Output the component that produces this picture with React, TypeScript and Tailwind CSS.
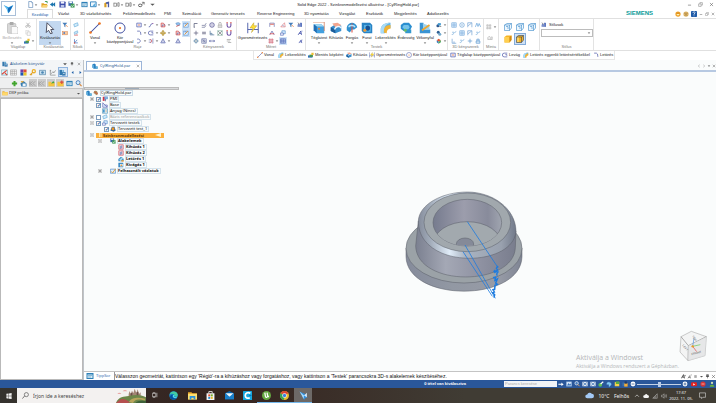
import { useState, type ReactNode } from "react"
import clsx from "clsx"

const glyphs: Record<string, ReactNode> = {
  newDoc: <><path d="M4 1h6l3 3v11H4z" fill="#fff" stroke="#5b86b5" strokeWidth="1.5" /><path d="M10 1v3h3" fill="none" stroke="#5b86b5" /></>,
  open: <><path d="M1 5h5l2 2h6v7H1z" fill="#e2a52c" /><path d="M4 9h12l-3 6H1z" fill="#f8d475" /><path d="M9 1h5v4" fill="none" stroke="#2e9140" strokeWidth="2" /></>,
  arrowLeft: <path d="M14 3v10L9 9v4L2 8l7-5v4z" fill="#1a74ae" />,
  save: <><path d="M1 1h13l1 2v12H1z" fill="#3949a8" /><path d="M4 1h8v5H4z" fill="#f2f5ff" /><path d="M4 9h8v6H4z" fill="#b9c4e8" /></>,
  saveAs: <><path d="M1 1h10v10H1z" fill="#3966ae" /><path d="M3 1h6v4H3z" fill="#fff" /><path d="M6 6h9v9H6z" fill="#3e9a56" /><path d="M8 10l2 3 4-5" fill="none" stroke="#fff" strokeWidth="1.5" /></>,
  props: <><path d="M1 2h14v12H1z" fill="#2f80b7" /><path d="M3 5h10v7H3z" fill="#d6ecf7" /><path d="M4 7h8M4 10h6" stroke="#4586b0" /></>,
  window: <><path d="M1 2h13v11H1z" fill="#edf6fc" stroke="#277bb8" strokeWidth="2" /><path d="M6 10l7-6-2 9z" fill="#5aaee0" /></>,
  tools: <><path d="M3 14V5l5-3v12z" fill="#d59c23" /><path d="M7 3l7-2v13h-3V6L7 7z" fill="#4a5ba5" /></>,
  undo: <path d="M2 4v9M2 5h6v7H3M11 4h3v8h-3z" fill="none" stroke="#777" strokeWidth="1.7" />,
  link: <><ellipse cx="5" cy="10" rx="4" ry="3" fill="none" stroke="#555" strokeWidth="2" /><path d="M8 9l6-6M9 3h5v5" fill="none" stroke="#555" strokeWidth="1.6" /></>,
  arrowDown: <path d="M3 6h10l-5 5z" fill="#555" />,
  logo: <><path d="M1 3l7 3 7-3-4 8-3 4-2-6z" fill="#2c9ce0" /><path d="M1 3l8 6-2 5-2-6z" fill="#6bc6f2" /><path d="M7 8l7-4-6 11z" fill="#1767b5" /></>,
  paste: <><rect x="2" y="2" width="11" height="13" rx="1" fill="#d8d8d8" stroke="#bbb" /><path d="M5 0h5v4H5z" fill="#aaa" /><path d="M7 6h7l2 2v8H7z" fill="#fafafa" stroke="#bbb" /></>,
  cut: <><path d="M4 2l7 9M12 2l-7 9" stroke="#999" strokeWidth="1.6" /><circle cx="4" cy="12" r="2.4" fill="none" stroke="#999" strokeWidth="1.4" /><circle cx="12" cy="12" r="2.4" fill="none" stroke="#999" strokeWidth="1.4" /></>,
  copy: <><path d="M2 1h8v10H2z" fill="#f8f8f8" stroke="#bbb" /><path d="M6 5h8v10H6z" fill="#f8f8f8" stroke="#aaa" /></>,
  pasteBlue: <><path d="M0 9h12v6H0z" fill="#2f6fbd" /><path d="M4 7h9v6H4z" fill="#4c9750" /><path d="M9 2h6v6H9z" fill="#f0bd30" /></>,
  cursor: <path d="M4 1l9 9H9l2 5-2 1-3-5-3 3z" fill="#fff" stroke="#334" strokeWidth="1.1" />,
  filter: <><path d="M1 2h13L9 8v6L6 12V8z" fill="#457db9" /><path d="M10 8l5 5" stroke="#e8762f" strokeWidth="2" /></>,
  box: <><rect x="1" y="4" width="14" height="9" fill="#f6caa0" stroke="#ce6b36" /><path d="M4 6h4v4H4z" fill="#3a6fc7" /></>,
  plane: <path d="M2 6l10-4 2 7-10 4z" fill="#d3ecfa" stroke="#4a9dd2" strokeWidth="1.4" />,
  planeRed: <><path d="M3 6l9-4 1 6-9 4z" fill="#c3e4f6" stroke="#3a8cc6" /><path d="M3 14h9M9 11l4 3" stroke="#d9534f" strokeWidth="1.6" /></>,
  axes: <><path d="M4 3v10h9M4 13l7-8" fill="none" stroke="#3b6ec0" strokeWidth="1.8" /><circle cx="4" cy="13" r="2" fill="#da4c37" /></>,
  line: <><path d="M2 14L14 2" stroke="#3949a0" strokeWidth="1.4" /><circle cx="2" cy="14" r="1.8" fill="#ed7624" /><circle cx="14" cy="2" r="1.8" fill="#ed7624" /></>,
  circle: <><circle cx="8" cy="8" r="6.7" fill="none" stroke="#3f4d9f" strokeWidth="1.3" /><circle cx="8" cy="8" r="1.5" fill="#ee792a" /></>,
  rect: <><path d="M2 3h12v10H2z" fill="#eef" stroke="#4552a2" strokeWidth="1.7" /><circle cx="8" cy="8" r="1.8" fill="#ed792d" /></>,
  curve: <><path d="M2 13C8 15 5 3 13 4" fill="none" stroke="#4450a0" strokeWidth="1.9" /><circle cx="13" cy="4" r="1.6" fill="#9b54a5" /></>,
  offset: <><path d="M3 13V3h6l4 5v5z" fill="#f9d5d2" stroke="#d54d4b" strokeWidth="2" /><path d="M6 13V8h8" stroke="#4a58a0" fill="none" strokeWidth="1.5" /></>,
  arc: <path d="M3 3h6q4 0 4 10" fill="none" stroke="#4151a3" strokeWidth="1.8" />,
  trim: <path d="M14 3H6a5 5 0 0 0 0 10h8M9 7h4v3" fill="none" stroke="#4652a5" strokeWidth="1.8" />,
  move: <path d="M8 0l3 4h-2v3h3V5l4 3-4 3V9H9v3h2l-3 4-3-4h2V9H4v2L0 8l4-3v2h3V4H5z" fill="#cda22a" stroke="#8d7325" strokeWidth=".6" />,
  arc2: <path d="M3 3c8-2 12 7 4 10H3" fill="none" stroke="#4454a4" strokeWidth="1.8" />,
  mirror: <><path d="M13 1v14M2 5h7M2 11h7" stroke="#4450a0" strokeWidth="1.4" /><path d="M6 3l5 5-5 5" fill="none" stroke="#d64950" strokeWidth="2" /></>,
  triangle: <><path d="M8 2l6 11H2z" fill="#e9ebf8" stroke="#4855a2" strokeWidth="1.6" /><path d="M8 6v7" stroke="#4855a2" /></>,
  sketch: <><path d="M1 3h13v11H1z" fill="#d8ecff" stroke="#4987cb" strokeWidth="1.4" /><path d="M4 12l9-9" stroke="#e6902e" strokeWidth="2.4" /><path d="M4 5h5" stroke="#356bb4" strokeWidth="1.5" /></>,
  blueRed: <><path d="M2 3l7-2 5 3-2 5-6 1z" fill="#8dbde9" stroke="#4373b8" /><path d="M3 12l9-4" stroke="#dd564c" strokeWidth="2" /></>,
  corner: <path d="M3 14V4h9M2 14h3" fill="none" stroke="#434869" strokeWidth="1.8" />,
  tangent: <path d="M2 9h8l4-6M2 14h8l3-5" fill="none" stroke="#535984" strokeWidth="1.6" />,
  ring: <><circle cx="8" cy="8" r="6" fill="none" stroke="#4c4b8f" strokeWidth="2" /><circle cx="8" cy="8" r="3" fill="none" stroke="#625fa4" /></>,
  lock: <><path d="M3 8h10v7H3z" fill="#ddd" stroke="#888" /><path d="M5 8V4a3 3 0 0 1 6 0v4" fill="none" stroke="#888" strokeWidth="1.5" /></>,
  magnet: <><path d="M3 3v6a5 5 0 0 0 10 0V3" fill="none" stroke="#7254a8" strokeWidth="3" /><path d="M1 2h4M11 2h4" stroke="#d8554c" strokeWidth="3" /></>,
  plus: <path d="M8 2v12M2 8h12" stroke="#545475" strokeWidth="1.8" />,
  equal: <path d="M3 6h10M3 10h10" stroke="#555576" strokeWidth="2" />,
  perp: <path d="M3 2v11h11M3 9h5v4" fill="none" stroke="#446b92" strokeWidth="1.7" />,
  sym: <><path d="M2 2l12 12M14 2L2 14" stroke="#383844" strokeWidth="1.3" /><path d="M2 2h12v12H2z" fill="none" stroke="#66a28b" strokeWidth="1.4" /></>,
  diamond: <><path d="M8 2l6 6-6 6-6-6z" fill="none" stroke="#386b96" strokeWidth="2" /><path d="M8 5v6M5 8h6" stroke="#356" /></>,
  gridX: <><path d="M2 2h12v12H2zM2 8h12M8 2v12" fill="none" stroke="#4d5590" strokeWidth="1.5" /><path d="M3 3l10 10" stroke="#4d5590" /></>,
  wide: <path d="M1 8h14M4 5L1 8l3 3M12 5l3 3-3 3" fill="none" stroke="#4c569c" strokeWidth="1.8" />,
  list: <path d="M2 4h11M2 8h9M5 12h9" stroke="#888" strokeWidth="1.5" />,
  dim: <><path d="M1 1v14M15 1v14M1 10h14" stroke="#4658a7" strokeWidth="1.2" /><path d="M9 1L4 8h4l-2 6 7-9H9z" fill="#ffe039" stroke="#b69318" strokeWidth=".6" /></>,
  angle: <><path d="M2 13V3h12v10" fill="none" stroke="#4c55a0" strokeWidth="1.5" /><path d="M3 6h10" stroke="#df6259" strokeWidth="2.5" /></>,
  angleRed: <><path d="M2 13L12 2l2 11z" fill="none" stroke="#d7595d" strokeWidth="1.4" /><path d="M5 10c4-4 5 0 6 3" fill="none" stroke="#5378b7" /></>,
  coord: <><path d="M2 13L8 3l6 10" fill="none" stroke="#4a55a2" strokeWidth="1.8" /><path d="M2 10h12" stroke="#d8464a" strokeWidth="2" /></>,
  tag: <><path d="M5 2h9v8H5z" fill="#d4eaff" stroke="#4380c1" strokeWidth="1.5" /><path d="M1 8h8v6H1z" fill="#eef" stroke="#4560ac" strokeWidth="1.5" /></>,
  hashRed: <path d="M5 1v14M11 1v14M1 5h14M1 11h14" stroke="#ca4c61" strokeWidth="1.8" />,
  table: <path d="M1 2h14v12H1zM1 6h14M1 10h14M5 2v12M10 2v12" fill="#d6e6fc" stroke="#3e5aae" strokeWidth="1.5" />,
  tableGrey: <path d="M1 2h14v12H1zM1 6h14M1 10h14M5 2v12M10 2v12" fill="#fff" stroke="#999" strokeWidth="1.3" />,
  letterA: <><path d="M3 13L10 3l2 10M6 9h5" fill="none" stroke="#2d3da0" strokeWidth="2" /><path d="M11 3h4" stroke="#2d3da0" /></>,
  letterBars: <><path d="M3 13V7h3v6M9 13V3h3v10" fill="none" stroke="#2748aa" strokeWidth="2" /><path d="M2 2l5 4" stroke="#444" strokeWidth="1.6" /></>,
  block: <><path d="M1 3h10l4 3v9H5l-4-4z" fill="#43a0df" /><path d="M1 3h10l4 3H5z" fill="#a3d8f3" /><path d="M1 3v8l4 4V6z" fill="#216db3" /><path d="M0 0h15v12" fill="none" stroke="#d07b5a" strokeWidth="1" /><circle cx="8" cy="9" r="1.3" fill="#f08135" /></>,
  extrude: <><path d="M1 7l8-5 6 3v7l-8 3-6-3z" fill="#398fce" /><path d="M1 7l6 3v5l-6-3z" fill="#1d5d99" /><path d="M3 2l7-1 5 3-7 4z" fill="#f4a58d" /><path d="M6 10c2-5 7-5 9-2" fill="none" stroke="#e9f6ff" strokeWidth="2" /></>,
  revolve: <><path d="M1 7c2-8 12-8 14 0l-4 3H8l-3 4-4-3z" fill="#3091d0" /><path d="M8 2v12" stroke="#d95045" strokeWidth="1.4" /><path d="M4 7c0-3 7-3 8 0" fill="none" stroke="#b7e2fa" strokeWidth="2" /></>,
  hole: <><path d="M1 1h11l3 3v11H4l-3-3z" fill="#2983c5" /><path d="M4 4h9v9H4z" fill="#5ab3e4" /><ellipse cx="9" cy="8" rx="3" ry="3.5" fill="#174f91" /><circle cx="5" cy="11" r="2" fill="#ef9b36" /></>,
  round: <><path d="M1 15V9C2 3 8 1 14 1v7c-4 0-7 3-7 7z" fill="#66b4e4" /><path d="M5 14V9c2-4 5-5 9-5v5c-4 0-5 3-5 6z" fill="#efb336" /><path d="M1 15V9C2 3 8 1 14 1c-7 2-9 6-9 14z" fill="#a9dcf7" /></>,
  draft: <><path d="M1 4l4-3h7l4 5-3 6H5L1 9z" fill="#2b8ed0" /><path d="M5 4h6l2 3-2 3H6L3 7z" fill="#75c3ea" /><path d="M7 10h8v5H7z" fill="#3498cf" /><circle cx="7" cy="11" r="2" fill="#67bc6d" /></>,
  thin: <><path d="M1 1h5v9h9v5H1z" fill="#3a94d3" /><path d="M5 2l9 3v5H6z" fill="#9dd3ee" /><path d="M4 11L14 4" stroke="#f0a72e" strokeWidth="2.3" /></>,
  combine: <><circle cx="5" cy="10" r="4" fill="#2c568e" /><path d="M5 3h8v6H5z" fill="#459bd0" /><path d="M9 12h5" stroke="#444" strokeWidth="1.5" /></>,
  ball: <><circle cx="6" cy="6" r="4" fill="#2d5f93" /><circle cx="10" cy="11" r="4" fill="#73aacd" /></>,
  color: <><path d="M2 6l5-4 6 4-6 4z" fill="#e65432" /><path d="M2 6l5 4v5l-5-4z" fill="#3076bb" /><path d="M7 10l6-4v5l-6 4z" fill="#46a75b" /></>,
  cGrid: <path d="M2 2h12v12H2zM2 8h12M8 2v12" fill="#e5f3ff" stroke="#619bd4" strokeWidth="1.5" />,
  cRing: <><circle cx="8" cy="8" r="6" fill="none" stroke="#649cd2" strokeWidth="1.8" /><circle cx="8" cy="8" r="2" fill="#76afe1" /></>,
  cFlag: <path d="M2 14V2h11v12M3 10l9-7" fill="none" stroke="#669bcf" strokeWidth="1.7" />,
  cWave: <path d="M1 13l4-10 3 9 3-8 4 9" fill="none" stroke="#5f9fd8" strokeWidth="1.8" />,
  cSlash: <path d="M2 12c4 2 8-8 12-8M3 6h5" fill="none" stroke="#6aa4d6" strokeWidth="1.7" />,
  cPerp: <path d="M3 2v12h11M8 9v5" fill="none" stroke="#689bd1" strokeWidth="1.8" />,
  cPlus: <path d="M8 2v12M2 8h12" stroke="#689fd2" strokeWidth="2" />,
  cLock: <path d="M3 8h10v6H3zM5 8V3h6v5" fill="#d8ebf9" stroke="#5b94cd" strokeWidth="1.7" />,
  pattern: <path d="M2 2h4v4H2zM9 2h4v4H9zM2 9h4v4H2zM9 9h4v4H9z" fill="#eee" stroke="#888" />,
  patternRound: <path d="M2 12V7l4-4 4 4v5zM11 5h3v7h-4" fill="#eee" stroke="#888" />,
  cubeWire: <path d="M1 4l5-3h9v9l-4 5H1zM1 4h10v11M11 4l4-3M4 7h4v5" fill="#edf7ff" stroke="#3c8bc9" strokeWidth="1.2" />,
  cubeGold: <><path d="M1 4l4-3h10v9l-4 5H1z" fill="#f6b323" /><path d="M1 4h10v11H1z" fill="#ffcf50" /><path d="M11 4l4-3v9l-4 5z" fill="#cf8815" /></>,
  cubeEdge: <><path d="M1 4l4-3h10v9l-4 5H1z" fill="#f6b323" stroke="#38455a" strokeWidth="1.2" /><path d="M1 4h10v11M11 4l4-3" fill="none" stroke="#38455a" strokeWidth="1.2" /><path d="M4 5v9" stroke="#fff1a0" strokeWidth="2" /></>,
  smile: <><circle cx="8" cy="8" r="7" fill="#efa12a" /><path d="M4 8c1 5 7 5 8 0z" fill="#fff2b6" /><circle cx="5.5" cy="5.5" r="1" fill="#744800" /><circle cx="10.5" cy="5.5" r="1" fill="#744800" /></>,
  frown: <><circle cx="8" cy="8" r="7" fill="#ddb567" /><path d="M5 12c1-3 5-3 6 0" fill="none" stroke="#765324" strokeWidth="1.3" /><path d="M4 6h3M9 6h3" stroke="#765324" strokeWidth="1.5" /></>,
  help: <><rect width="16" height="16" rx="2" fill="#205ca8" /><path d="M5 5c0-4 7-3 6 0L8 8v2M8 12v2" fill="none" stroke="#fff" strokeWidth="2" /></>,
  min: <path d="M3 10h10" stroke="#555" strokeWidth="1.8" />,
  restore: <><path d="M2 6h8v8H2z" fill="none" stroke="#666" strokeWidth="1.4" /><path d="M6 5V2h8v8h-3" fill="none" stroke="#666" strokeWidth="1.4" /></>,
  close: <path d="M3 3l10 10M13 3L3 13" stroke="#555" strokeWidth="1.7" />,
  left: <path d="M11 3L5 8l6 5" fill="none" stroke="#777" strokeWidth="1.5" />,
  right: <path d="M5 3l6 5-6 5" fill="none" stroke="#777" strokeWidth="1.5" />,
  leftBlue: <path d="M11 3L5 8l6 5z" fill="#1d5fa8" />,
  rightBlue: <path d="M5 3l6 5-6 5z" fill="#1d5fa8" />,
  pin: <path d="M5 2h6v6H5zM3 8h10M8 8v6" fill="#777" stroke="#333" strokeWidth="1.5" />,
  library: <><path d="M1 2h6v12H1z" fill="#3278ae" /><path d="M8 2h3v12H8z" fill="#61a9d7" /><path d="M7 7h8v8H7z" fill="#387bb0" /><path d="M9 10h4" stroke="#fff" strokeWidth="1.6" /></>,
  part: <><path d="M1 4l5-3 4 3v5h5v6H5l-4-3z" fill="#2a7fc0" /><path d="M1 4l4 2v9l-4-3z" fill="#62b3df" /><path d="M10 9h5v6h-5z" fill="#64b8df" /></>,
  redCross: <><path d="M1 2h14v12H1z" fill="#dbf1fa" stroke="#478e9f" /><path d="M2 12L13 3M9 9l5 5" stroke="#df4234" strokeWidth="2.4" /></>,
  palette: <><path d="M1 1h7v7H1z" fill="#713ea5" /><path d="M8 1h7v7H8z" fill="#df4d37" /><path d="M1 8h7v7H1z" fill="#1e57b4" /><path d="M8 8h7v7H8z" fill="#e7c52d" /></>,
  key: <><circle cx="11" cy="5" r="3.5" fill="none" stroke="#edb029" strokeWidth="3" /><path d="M9 7l-7 7M4 11l3 3" stroke="#dfa126" strokeWidth="2.4" /></>,
  camera: <><path d="M1 3h14v10H1z" fill="#c8dfee" stroke="#4c81a7" strokeWidth="1.5" /><circle cx="8" cy="8" r="3" fill="#4a86b4" /></>,
  chart: <path d="M3 2v12h12M5 11l4-5 2 3 4-6M2 4h3" fill="none" stroke="#777" strokeWidth="1.4" />,
  green: <path d="M8 2v12M2 8h12" stroke="#41a52d" strokeWidth="4.5" />,
  home: <><path d="M1 8l7-6 7 6v7H3z" fill="#347bb0" /><path d="M6 8h7v6H6z" fill="#eef5fa" /><path d="M2 4h6" stroke="#e3a634" strokeWidth="3" /></>,
  muted: <path d="M8 3L3 8l5 5M14 3L9 8l5 5M2 3v10" fill="none" stroke="#9c9c9c" strokeWidth="2" />,
  folder: <><path d="M1 3h5l2 2h7v9H1z" fill="#e9ae34" /><path d="M1 6h14v8H1z" fill="#ffd76a" /></>,
  folderGreen: <><path d="M1 4h5l2 2h7v8H1z" fill="#f5c541" /><path d="M7 8l5-6 3 5z" fill="#44a640" /></>,
  folderRed: <><path d="M1 4h5l2 2h7v8H1z" fill="#f5c541" /><path d="M11 1v8M7 5h8" stroke="#dd4937" strokeWidth="2.6" /></>,
  magnifier: <><circle cx="7" cy="6" r="4.5" fill="#d8f0ff" stroke="#4179b9" strokeWidth="2" /><path d="M10 9l5 5" stroke="#d58638" strokeWidth="2.6" /></>,
  pmi: <><path d="M2 2h5v11H2z" fill="#cf3545" /><path d="M7 2h8v6H7z" fill="#8ab9e7" stroke="#386bb3" /><path d="M9 8v6" stroke="#3a5688" strokeWidth="2" /></>,
  base: <path d="M2 2v12h12L2 2M6 8h8v6" fill="#dceeff" stroke="#5c63b1" strokeWidth="1.7" />,
  material: <><path d="M1 2h14v12H1z" fill="#e1f2fa" stroke="#3d85a7" strokeWidth="1.5" /><path d="M3 4h4v8H3z" fill="#308ac7" /><path d="M9 6h4M9 9h4" stroke="#c0803c" /></>,
  bodyGold: <><path d="M1 12l4-10h7l3 10-5 3z" fill="#32659e" /><circle cx="8" cy="7" r="4" fill="#e99629" /></>,
  extrudeRed: <><path d="M2 2h12v12H2z" fill="#fce7e8" stroke="#cf4d5c" strokeWidth="1.7" /><path d="M6 5v8M10 4v8" stroke="#4366ad" strokeWidth="2" /></>,
  chamfer: <><path d="M1 14V8l7-6 7 5v7z" fill="#398ac5" /><path d="M3 10l8-7 3 2-7 9z" fill="#a6dbed" /><path d="M9 11h6v4H9z" fill="#eda23b" /></>,
  cutout: <><path d="M1 2h13v12H1z" fill="#3084c2" /><path d="M5 5h8v7H5z" fill="#d7edf7" /><circle cx="9" cy="9" r="2.4" fill="#ee9b41" /></>,
  used: <><path d="M1 3h14v11H1z" fill="#dcecff" stroke="#437fbf" strokeWidth="1.6" /><path d="M3 9l4 4 8-11" fill="none" stroke="#df9e2e" strokeWidth="2.5" /></>,
  swirl: <><path d="M3 3c7-3 10 2 10 7l-4 4c-3-3-6-5-8-6z" fill="#a98b60" /><path d="M4 5l9 6" stroke="#d85238" strokeWidth="2.2" /></>,
  wArrow: <path d="M1 7h8V4l6 5-6 4v-3H1z" fill="#fff" />,
  wWindow: <><path d="M1 2h14v12H1z" fill="#d7e7fa" stroke="#7ba7d8" /><path d="M3 11l4-6 3 4 3-3v6H3z" fill="#3770b6" /></>,
  wZoom: <><circle cx="7" cy="6" r="4.5" fill="#477dbe" stroke="#e5edf7" strokeWidth="2" /><path d="M10 9l5 5" stroke="#e4a564" strokeWidth="2.6" /></>,
  wFit: <><path d="M1 2h14v12H1z" fill="#e1eaf4" /><path d="M3 4l10 8M13 4L3 12" stroke="#3e74b5" strokeWidth="2" /></>,
  wGreen: <><circle cx="6" cy="10" r="5" fill="#5ebd58" /><path d="M7 8l7-6" stroke="#fff" strokeWidth="3" /></>,
  wRotate: <path d="M2 9c0-9 12-6 12 0M8 7l6 3-6 5V7z" fill="#80c9f3" stroke="#80c9f3" />,
  wYellow: <><path d="M2 3h12v11H2z" fill="#f5d34c" /><path d="M5 1h9v7H5z" fill="#5bab42" /></>,
  wOrange: <><path d="M1 4h8v10H1z" fill="#3b6fa9" /><path d="M6 6h9v9H6z" fill="#f4ae37" /><path d="M7 1h6v6H7z" fill="#1f3a67" /></>,
  wMinus: <><circle cx="8" cy="8" r="6.5" fill="#fff" /><path d="M4 8h8" stroke="#355c92" strokeWidth="2" /></>,
  wPlus: <><circle cx="8" cy="8" r="6.5" fill="#fff" /><path d="M4 8h8M8 4v8" stroke="#355c92" strokeWidth="2" /></>,
  youtube: <><rect x="0" y="3" width="16" height="11" rx="3" fill="#e22121" /><path d="M6 6l5 3-5 3z" fill="#fff" /></>,
  record: <><circle cx="8" cy="8" r="7" fill="#d73537" /><path d="M4 8h8" stroke="#f9cdc5" strokeWidth="2" /></>,
  person: <><circle cx="8" cy="5" r="3" fill="#d9e1b4" /><path d="M2 15c0-7 12-7 12 0z" fill="#67b33c" /></>,
  fontBig: <path d="M1 14L8 2l3 12M4 10h7M13 3v4" fill="none" stroke="#222" strokeWidth="2.2" />,
  fontSmall: <path d="M3 14L9 5l2 9M5 11h5M12 3h3" fill="none" stroke="#333" strokeWidth="1.6" />,
  lines: <path d="M4 5h8M4 8h8M4 11h8" stroke="#555" strokeWidth="1.5" />,
  windows: <path d="M1 2l6-1v6.5H1zM8 1l7-1v7.5H8zM1 8.5h6V15l-6-1zM8 8.5h7V16l-7-1z" fill="#f2f2f2" />,
  search: <><circle cx="10" cy="6" r="4.7" fill="none" stroke="#444" strokeWidth="1.4" /><path d="M6 9l-5 6" stroke="#444" strokeWidth="1.6" /></>,
  taskview: <><path d="M1 4h9v8H1z" fill="none" stroke="#eee" strokeWidth="1.5" /><path d="M13 2v12M2 1h7M2 15h7" stroke="#eee" strokeWidth="1.5" /></>,
  edge: <><circle cx="8" cy="8" r="7.5" fill="#1583cd" /><path d="M1 7C2-1 14-1 15.500 6c.5 4-3 5-6 3 1-4-5-6-8.500-2z" fill="#42cba3" /><path d="M7 7c-3 3 0 7 6 6-4 4-10 2-11-1-1-4 3-6 6-5z" fill="#064f9a" /><path d="M7 8c2-2 4 0 2 2 2 2 5 1 6-1-1 5-8 5-8-1z" fill="#5ee0ed" /></>,
  explorer: <><path d="M0 2h6l2 2h8v11H0z" fill="#eaa92a" /><path d="M0 5h16v10H0z" fill="#ffdf70" /><path d="M3 9h10v6h-3v-3H6v3H3z" fill="#2991dc" /></>,
  store: <><path d="M1 4h14v12H1z" fill="#f5f5f5" /><path d="M5 4V1h6v3" fill="none" stroke="#eee" strokeWidth="1.5" /><path d="M4 6h3.500v3.500H4z" fill="#e54d2d" /><path d="M8.500 6H12v3.500H8.500z" fill="#72ad28" /><path d="M4 10.500h3.500V14H4z" fill="#2189cf" /><path d="M8.500 10.500H12V14H8.500z" fill="#edb529" /></>,
  mail: <><path d="M0 4h16v11H0z" fill="#187fcb" /><path d="M0 4l8-4 8 4-8 6z" fill="#0763ac" /><path d="M1 4h14l-7 6z" fill="#f1f8fc" /></>,
  cc: <><rect width="16" height="16" rx="1" fill="#16a7df" /><path d="M13 4c-5-3-9 0-9 4s4 6 8 4" fill="none" stroke="#fff" strokeWidth="3" /><path d="M11 8h4" stroke="#0a74b6" strokeWidth="2" /></>,
  torrent: <><circle cx="8" cy="8" r="8" fill="#65a942" /><path d="M5 3l1 6c1 4 5 2 4-1L9 3M10 8l2 3" fill="none" stroke="#fff" strokeWidth="2.2" /></>,
  chrome: <><circle cx="8" cy="8" r="8" fill="#e5bd2e" /><path d="M8 8L1 4a8 8 0 0 1 14 0z" fill="#dc4532" /><path d="M8 8L1 4a8 8 0 0 0 6 12z" fill="#38a354" /><circle cx="8" cy="8" r="4" fill="#fff" /><circle cx="8" cy="8" r="3" fill="#3b7de0" /></>,
  solidEdge: <><path d="M1 1l9 4 5 6-4 2-2 3-3-7z" fill="#338edb" /><path d="M1 1l8 7-1 6-3-6z" fill="#a4dbff" /><path d="M9 8l5-5v8z" fill="#d6ebfb" /></>,
  cloud: <path d="M4 13a3.500 3.500 0 0 1 0-7 4.500 4.500 0 0 1 8-1 4 4 0 0 1 0 8z" fill="#a3c9f5" />,
  cloudWhite: <path d="M4 13a3.500 3.500 0 0 1 0-7 4.500 4.500 0 0 1 8-1 4 4 0 0 1 0 8z" fill="#f4f4f4" />,
  up: <path d="M3 10l5-5 5 5" fill="none" stroke="#eee" strokeWidth="1.6" />,
  wifi: <path d="M2 14L14 2v12zM6 14v-4M10 14V7" fill="none" stroke="#c8c8c8" strokeWidth="1.3" />,
  speaker: <path d="M1 6h3l4-4v12l-4-4H1zM10 5c2 2 2 4 0 6M13 3c3 4 3 7 0 10" fill="none" stroke="#ccc" strokeWidth="1.3" />,
  note: <path d="M1 2h14v10H9l-3 3v-3H1z" fill="none" stroke="#ddd" strokeWidth="1.4" />,
}

function Icon({ name, className = "size-[6px]" }: { name: string; className?: string }) {
  return (
    <svg viewBox="0 0 16 16" aria-hidden="true" className={clsx("block shrink-0", className)}>
      {glyphs[name]}
    </svg>
  )
}

function IconButton({ name, className = "h-2 w-2", icon }: { name: string; className?: string; icon?: string }) {
  return (
    <button type="button" aria-label={name} className={clsx("flex shrink-0 items-center justify-center", className)}>
      <Icon name={name} className={icon} />
    </button>
  )
}

function DropButton({ name }: { name: string }) {
  return (
    <button type="button" aria-label={name} className="flex h-2 w-3 shrink-0 items-center justify-start">
      <Icon name={name} />
      <Icon name="arrowDown" className="ml-px size-[4px]" />
    </button>
  )
}

function BigButton({ icon, label, className, arrow, active }: { icon: string; label: string; className: string; arrow?: boolean; active?: boolean }) {
  return (
    <button
      type="button"
      className={clsx("flex h-[24px] shrink-0 flex-col items-center pt-px leading-[4px]", className, active && "bg-[#c3d8f0]")}
    >
      <Icon name={icon} className="size-[12px]" />
      <span className="mt-[2px] whitespace-pre text-center">{label}</span>
      {arrow && <Icon name="arrowDown" className="mt-px size-[4px]" />}
    </button>
  )
}

function Group({ label, className, children }: { label: string; className: string; children: ReactNode }) {
  return (
    <section className={clsx("flex shrink-0 flex-col border-r border-[#e3e3e3]", className)}>
      <div className="flex h-[26px] pt-[2px]">{children}</div>
      <h2 className="text-center leading-[4px] text-[#777]">{label}</h2>
    </section>
  )
}

const quickAccess: [string, string][] = [
  ["newDoc", "w-[14px]"],
  ["open", "w-[8px]"],
  ["arrowLeft", "w-[10px]"],
  ["save", "w-[9px]"],
  ["saveAs", "w-[13px]"],
  ["props", "w-[9px]"],
  ["window", "w-[13px]"],
  ["tools", "w-[10px]"],
  ["undo", "w-[12px]"],
  ["undo", "w-[13px]"],
  ["link", "w-[11px]"],
  ["arrowDown", "w-[6px]"],
]
const withArrow = [0, 4, 6, 8, 9]

const tabs: [string, string][] = [
  ["Vázlat", "w-[22px]"],
  ["3D vázlatkészítés", "w-[43px]"],
  ["Felületmodellezés", "w-[41px]"],
  ["PMI", "w-[18px]"],
  ["Szimuláció", "w-[29px]"],
  ["Generatív tervezés", "w-[46px]"],
  ["Reverse Engineering", "w-[47px]"],
  ["3D nyomtatás", "w-[35px]"],
  ["Vizsgálat", "w-[27px]"],
  ["Eszközök", "w-[28px]"],
  ["Megjelenítés", "w-[33px]"],
  ["Adatkezelés", "w-[26px]"],
]

function Header() {
  return (
    <header className="grid grid-cols-[18px_minmax(0,1fr)_auto_minmax(0,1fr)_18px] grid-rows-[9px_9px] bg-white">
      <button type="button" aria-label="Solid Edge" className="row-span-2 ml-px mt-px flex h-[15px] w-[15px] items-center justify-center border border-[#a9bfd8]">
        <Icon name="logo" className="size-[11px]" />
      </button>
      <div className="flex items-center pl-[9px]">
        {quickAccess.map(([name, width], i) => (
          <button key={i} type="button" aria-label={name} className={clsx("flex shrink-0 items-center", width)}>
            <Icon name={name} className="size-[7px]" />
            {withArrow.includes(i) && <Icon name="arrowDown" className="size-[4px]" />}
          </button>
        ))}
      </div>
      <h1 className="self-center leading-[9px]">Solid Edge 2022 - Szinkronmodellezési alkatrész - [CylRingHold.par]</h1>
      <div className="col-span-2 flex items-center justify-end gap-[5px] pr-[2px]">
        {["min", "restore", "close"].map((name) => (
          <IconButton key={name} name={name} className="size-[6px]" icon="size-[5px]" />
        ))}
      </div>
      <nav className="col-span-2 flex items-end whitespace-nowrap">
        <button type="button" className="mr-[5px] ml-[9px] h-[9px] w-[26px] shrink-0 border border-b-0 border-[#dcdcdc] bg-white leading-[7px] text-[#1e5ea8]">
          Kezdőlap
        </button>
        {tabs.map(([label, width]) => (
          <button key={label} type="button" className={clsx("h-[9px] shrink-0 text-left leading-[9px]", width)}>
            {label}
          </button>
        ))}
      </nav>
      <div className="col-span-2 flex items-center justify-end">
        <strong className="mr-[21px] text-[6px] leading-[9px] text-[#0b9a98]">SIEMENS</strong>
        <IconButton name="smile" />
        <IconButton name="frown" />
        <IconButton name="help" />
        {["min", "restore", "close"].map((name) => (
          <IconButton key={name} name={name} className="h-2 w-[6px]" icon="size-[4px]" />
        ))}
      </div>
    </header>
  )
}

const drawTools = ["rect", "curve", "offset", "arc", "trim", "move", "arc2", "mirror", "triangle"]
const relations = ["corner", "tangent", "ring", "lock", "plus", "equal", "perp", "sym", "diamond", "gridX", "wide"]
const relations3d = ["cGrid", "cRing", "cFlag", "cWave", "cSlash", "cGrid", "cFlag", "cSlash", "cPerp", "cSlash", "cPlus", "cLock"]

function Ribbon() {
  return (
    <div className="flex h-[33px] border-y border-[#e0e0e0] bg-white">
      <Group label="Vágólap" className="w-[37px]">
        <div className="flex w-[24px] justify-center text-[#aaa]">
          <BigButton icon="paste" label="Beillesztés" className="w-[22px]" arrow />
        </div>
        <div>
          <IconButton name="cut" />
          <IconButton name="copy" />
          <DropButton name="pasteBlue" />
        </div>
      </Group>
      <Group label="Kiválasztás" className="w-[34px]">
        <BigButton icon="cursor" label="Kiválasztás" className="ml-[2px] w-[22px]" arrow active />
        <div>
          <IconButton name="filter" />
          <IconButton name="box" />
        </div>
      </Group>
      <Group label="Síkok" className="w-[14px]">
        <div className="pl-px">
          <IconButton name="plane" />
          <IconButton name="planeRed" />
          <IconButton name="axes" />
        </div>
      </Group>
      <Group label="Rajz" className="w-[106px]">
        <BigButton icon="line" label="Vonal" className="w-[20px]" arrow />
        <BigButton icon="circle" label={"Kör\nközéppontjával"} className="w-[30px]" />
        <div className="ml-px grid grid-cols-3 content-start">
          {drawTools.map((name) => <DropButton key={name} name={name} />)}
        </div>
        <div className="ml-[2px]">
          <IconButton name="blueRed" />
          <IconButton name="offset" />
          <IconButton name="triangle" />
        </div>
        <div>
          <IconButton name="sketch" className="h-2 w-2 bg-[#cfe3f8]" />
          <IconButton name="sketch" className="h-2 w-2 bg-[#cfe3f8]" />
        </div>
      </Group>
      <Group label="Kényszerek" className="w-[46px]">
        <div className="ml-px grid grid-cols-4 content-start">
          {relations.map((name) => <IconButton key={name} name={name} />)}
        </div>
        <div className="ml-px">
          <IconButton name="magnet" />
          <IconButton name="magnet" />
          <IconButton name="list" />
        </div>
      </Group>
      <Group label="Méret" className="w-[69px]">
        <BigButton icon="dim" label="Gyorsméretezés" className="w-[31px]" />
        <div className="grid grid-cols-[11px_8px_8px] content-start">
          <IconButton name="angle" />
          <IconButton name="angleRed" />
          <IconButton name="filter" />
          <IconButton name="coord" />
          <IconButton name="tag" />
          <span />
          <DropButton name="hashRed" />
          <IconButton name="table" className="h-2 w-2 bg-[#cfe3f8]" />
        </div>
        <div className="ml-px">
          <IconButton name="letterBars" />
          <IconButton name="letterA" />
          <IconButton name="letterA" icon="size-[5px]" />
        </div>
      </Group>
      <Group label="Testek" className="w-[142px]">
        <BigButton icon="block" label="Téglatest" className="ml-[4px] w-[18px]" arrow />
        <BigButton icon="extrude" label="Kihúzás" className="w-[16px]" />
        <BigButton icon="revolve" label="Forgás" className="w-[16px]" arrow />
        <BigButton icon="hole" label="Furat" className="w-[14px]" arrow />
        <BigButton icon="round" label="Lekerekítés" className="w-[23px]" arrow />
        <BigButton icon="draft" label="Érdesség" className="w-[18px]" />
        <BigButton icon="thin" label="Vékonyfal" className="w-[20px]" arrow />
        <div className="ml-px">
          <DropButton name="combine" />
          <DropButton name="ball" />
          <DropButton name="color" />
        </div>
      </Group>
      <Group label="3D kényszerek" className="w-[36px]">
        <div className="ml-[2px] grid grid-cols-4 content-start">
          {relations3d.map((name, i) => <IconButton key={i} name={name} />)}
        </div>
      </Group>
      <Group label="Minta" className="w-[15px]">
        <div className="flex flex-col gap-[3px] pt-[2px] pl-[2px]">
          <DropButton name="pattern" />
          <IconButton name="patternRound" />
        </div>
      </Group>
      <Group label="" className="w-[41px]">
        <div className="ml-[3px] grid grid-cols-3 content-start">
          {["cubeWire", "cubeWire", "cubeWire", "cubeGold"].map((name, i) => (
            <IconButton key={i} name={name} className="size-[12px]" icon="size-[8px]" />
          ))}
          <IconButton name="cubeEdge" className="size-[12px] border border-[#83abd9] bg-[#cfe1f5]" icon="size-[8px]" />
        </div>
      </Group>
      <Group label="Stílus" className="w-[54px]">
        <label className="flex w-full flex-col gap-px pl-px">
          <span className="flex h-[7px] items-center gap-[2px]">
            <Icon name="letterBars" /> Stílusok
          </span>
          <span className="flex h-[8px] w-[52px] items-center border border-[#bcbcbc]">
            <select className="h-full min-w-0 flex-1 appearance-none">
              <option></option>
            </select>
            <Icon name="arrowDown" className="mr-px size-[4px]" />
          </span>
        </label>
      </Group>
    </div>
  )
}

const commands: [string, string, string][] = [
  ["line", "Vonal", "w-[21px]"],
  ["round", "Lekerekítés", "w-[30px]"],
  ["pasteBlue", "Mentés képként", "w-[38px]"],
  ["extrude", "Kihúzás", "w-[23px]"],
  ["dim", "Gyorsméretezés", "w-[37px]"],
  ["circle", "Kör középpontjával", "w-[44px]"],
  ["rect", "Téglalap középpontjával", "w-[52px]"],
  ["trim", "Levág", "w-[21px]"],
  ["round", "Letörés egyenlő letörésértékekkel", "w-[70px]"],
  ["arc", "Letörés", "w-[21px]"],
]

function CommandStrip() {
  return (
    <div className="flex h-[9px] bg-white pl-[253px]">
      <div className="flex items-center whitespace-nowrap border border-t-0 border-[#e6e6e6] pl-[3px]">
        {commands.map(([icon, label, width]) => (
          <button key={label} type="button" className={clsx("flex shrink-0 items-center gap-px", width)}>
            <Icon name={icon} />
            {label}
          </button>
        ))}
      </div>
    </div>
  )
}

function LibraryPanel() {
  return (
    <aside className="flex w-[84px] shrink-0 flex-col border-r border-[#bfc4c9] bg-[#f3f5f7]">
      <div className="flex h-[7px] items-center gap-[2px] pr-[2px] pl-[2px]">
        <Icon name="library" />
        <h2 className="flex-1 font-['Noto_Sans',sans-serif] text-[#1b4f8f]">Alakelem könyvtár</h2>
        <IconButton name="arrowDown" className="size-[5px]" />
        <IconButton name="pin" className="size-[5px]" icon="size-[4px]" />
        <IconButton name="close" className="size-[5px]" icon="size-[4px]" />
      </div>
      <div className="flex h-[10px] items-center justify-between">
        {["redCross", "tableGrey", "palette", "key", "camera", "chart"].map((name) => (
          <IconButton key={name} name={name} icon="size-[7px]" />
        ))}
        <IconButton name="library" className="size-[10px] border border-[#90b4de] bg-[#dce9f7]" icon="size-[7px]" />
        <IconButton name="leftBlue" className="h-2 w-[6px]" icon="size-[5px]" />
        <IconButton name="rightBlue" className="h-2 w-[6px]" icon="size-[5px]" />
      </div>
      <div className="flex h-[11px] items-center justify-between border-t border-[#ddd] bg-[#eeeff0] pl-[10px]">
        {["green", "home", "muted", "muted", "folderGreen", "folderRed", "props", "magnifier"].map((name, i) => (
          <IconButton key={i} name={name} className={clsx("h-2 w-2", i > 1 && i < 6 && "bg-[#ccc]")} icon="size-[7px]" />
        ))}
      </div>
      <label className="flex h-[10px] items-center gap-px border border-[#c3c3c3] bg-[#e4e4e4] px-px">
        <Icon name="folder" />
        <select className="min-w-0 flex-1 appearance-none font-['Noto_Sans',sans-serif]">
          <option>DXF próba</option>
        </select>
        <Icon name="arrowDown" className="size-[5px]" />
      </label>
      <div className="flex-1 border border-[#b9b9b9] bg-white" />
    </aside>
  )
}

interface TreeNode {
  label: string
  icon: string
  indent: string
  expander?: "+" | "−"
  checked?: boolean
  style?: string
}

const nodes: TreeNode[] = [
  { label: "PMI", icon: "pmi", indent: "pl-[6px]", expander: "+", checked: true },
  { label: "Base", icon: "base", indent: "pl-[6px]", checked: true },
  { label: "Anyag (Nincs)", icon: "material", indent: "pl-[6px]" },
  { label: "Bázis referenciasíkok", icon: "plane", indent: "pl-[6px]", expander: "+", checked: false, style: "text-[#999]" },
  { label: "Tervezett testek", icon: "tag", indent: "pl-[6px]", expander: "−", checked: true },
  { label: "Tervezett test_1", icon: "bodyGold", indent: "pl-[14px]", checked: true },
  { label: "Szinkronmodellezési", icon: "", indent: "pl-[6px]", expander: "−" },
  { label: "Alakelemek", icon: "saveAs", indent: "pl-[14px]", expander: "−", style: "font-bold" },
  { label: "Kihúzás 1", icon: "extrudeRed", indent: "pl-[22px]", style: "font-bold" },
  { label: "Kihúzás 2", icon: "extrudeRed", indent: "pl-[22px]", style: "font-bold" },
  { label: "Letörés 1", icon: "chamfer", indent: "pl-[22px]", style: "font-bold" },
  { label: "Kivágás 1", icon: "cutout", indent: "pl-[22px]", style: "font-bold" },
  { label: "Felhasznált vázlatok", icon: "used", indent: "pl-[14px]", expander: "+", style: "font-bold" },
]

function TreeRow({ node }: { node: TreeNode }) {
  const [on, setOn] = useState(!!node.checked)
  return (
    <li className={clsx("flex h-[6px] items-center", node.indent)}>
      <span className="mr-[2px] flex size-[4px] shrink-0 items-center justify-center">
        {node.expander && (
          <svg viewBox="0 0 8 8" className="size-[4px]">
            <path d="M.5.500h7v7h-7z" fill="#fff" stroke="#999" />
            <path d={node.expander === "+" ? "M2 4h4M4 2v4" : "M2 4h4"} stroke="#333" />
          </svg>
        )}
      </span>
      {node.icon ? (
        <>
          <span className="mr-px flex size-[5px] shrink-0">
            {node.checked !== undefined && (
              <input
                type="checkbox"
                aria-label={node.label}
                checked={on}
                onChange={() => setOn(!on)}
                className="flex size-[5px] appearance-none items-center justify-center border border-[#7d9dbd] bg-white text-[5px] leading-none font-bold text-[#1c4f8c] checked:before:content-['✓']"
              />
            )}
          </span>
          <Icon name={node.icon} />
          <span className={clsx("ml-px h-[6px] border border-[#d5e3ec] pr-px leading-[4px]", node.style)}>{node.label}</span>
        </>
      ) : (
        <span className="flex h-[5px] w-[68px] items-center justify-between bg-[#fbb03b] pr-[3px] pl-[3px] leading-[5px] font-bold text-[#5a3305]">
          <svg viewBox="0 0 6 8" className="mr-px h-[4px] w-[3px]"><path d="M1 0v8M4 0v8" stroke="#fff4cf" strokeWidth="1.500" /></svg>
          <span className="flex-1">{node.label}</span>
          <svg viewBox="0 0 12 8" className="h-[4px] w-[6px]"><path d="M0 4l12-4v8z" fill="#fff4cf" /></svg>
        </span>
      )}
    </li>
  )
}

function FeatureTree() {
  return (
    <div className="w-[95px] pt-[15px] font-['Noto_Sans',sans-serif] text-[#111]">
      <div className="flex h-[3px] justify-center border border-[#bbb] bg-[#d9dbdd]">
        <span className="w-[14px] bg-[#9caab8]" />
      </div>
      <ul className="whitespace-nowrap">
        <li className="flex h-[6px] items-center gap-px pl-[2px]">
          <Icon name="part" />
          <Icon name="swirl" />
          <span className="h-[6px] border border-[#c9dbe8] pr-px leading-[4px]">CylRingHold.par</span>
        </li>
        {nodes.map((node) => <TreeRow key={node.label} node={node} />)}
      </ul>
    </div>
  )
}

function Model() {
  return (
    <svg viewBox="0 0 450 375" className="absolute top-[109px] left-[305px] h-[125px] w-[150px]">
      <defs>
        <linearGradient id="rim"><stop stopColor="#858b9b" /><stop offset=".4" stopColor="#9298a3" /><stop offset=".8" stopColor="#979ba6" /><stop offset="1" stopColor="#7f8594" /></linearGradient>
        <linearGradient id="side"><stop stopColor="#7b8090" /><stop offset=".3" stopColor="#a4a8b5" /><stop offset=".62" stopColor="#9093a3" /><stop offset="1" stopColor="#797d8d" /></linearGradient>
        <linearGradient id="bevel"><stop stopColor="#858c9b" /><stop offset=".12" stopColor="#a1abb9" /><stop offset=".32" stopColor="#e0ecf8" /><stop offset=".48" stopColor="#a9b3c1" /><stop offset=".85" stopColor="#99a1ae" /><stop offset="1" stopColor="#727a8a" /></linearGradient>
        <linearGradient id="bore"><stop stopColor="#767b8e" /><stop offset=".45" stopColor="#9c9dac" /><stop offset=".8" stopColor="#888b9b" /><stop offset="1" stopColor="#a0a5b0" /></linearGradient>
        <clipPath id="boreClip"><ellipse cx="235" cy="125" rx="103" ry="70" /></clipPath>
      </defs>
      <g stroke="#5a5f69" strokeWidth="1.5">
        <path d="M51 201v26c4 138 344 138 348 0v-26z" fill="url(#rim)" />
        <ellipse cx="225" cy="202" rx="174" ry="104" fill="#9ba2a7" />
        <path d="M88 120l-8 75c4 124 294 122 299 5l2-50z" fill="url(#side)" />
        <path d="M88 120c2-50 72-87 147-87s144 48 146 117c-6 110-293 118-293-30z" fill="url(#bevel)" />
        <ellipse cx="235" cy="124" rx="130" ry="88" fill="#a1a8ad" />
        <ellipse cx="235" cy="125" rx="103" ry="70" fill="url(#bore)" />
        <g clipPath="url(#boreClip)">
          <ellipse cx="235" cy="191" rx="103" ry="69" fill="#a2a9ae" />
          <ellipse cx="228" cy="189" rx="26" ry="18" fill="#858a98" />
        </g>
      </g>
      <g fill="none" stroke="#1d7bdf" strokeWidth="2.4">
        <path d="M235 122l92 138M228 192l91 160M222 212l88 134" />
        <path d="M327 255l-5 7 4 5-6 5 7 1-4 6 2 5M319 267l-4 4 4 5" strokeWidth="4" />
        <path d="M312 290l8-2-2 10 7-4-5 12 5 4-7 3-1 12-5 1 4 7-5 2 6 6-2 9" strokeWidth="4.500" />
      </g>
    </svg>
  )
}

function ViewCube() {
  return (
    <svg viewBox="0 0 84 94" className="absolute right-[9px] bottom-[9px] h-[32px] w-[28px]">
      <path d="M6 19L37 3l45 16-4 57-51 15L3 65z" fill="#f3f4f4" stroke="#999" strokeWidth="1.500" />
      <path d="M6 19l22 27 54-27M28 46l-1 45" fill="none" stroke="#888" strokeWidth="2" />
      <path d="M28 46l54-27-4 57-51 15z" fill="#dfe1e3" fillOpacity=".7" />
      <path d="M41 48l4-24" stroke="#488ee6" strokeWidth="2" />
      <path d="M41 48l23-5" stroke="#60c553" strokeWidth="2" />
      <path d="M41 48l12 16" stroke="#df4545" strokeWidth="2" />
      <circle cx="41" cy="48" r="3.500" fill="#e89b25" />
      <g fill="#555" fontSize="9" fontFamily="Liberation Sans, sans-serif">
        <text x="38" y="18" transform="rotate(55 38 18)">TOP</text>
        <text x="38" y="75" transform="rotate(-15 38 75)">FRONT</text>
        <text x="10" y="45" transform="rotate(55 10 45)">LEFT</text>
      </g>
    </svg>
  )
}

function Workspace() {
  return (
    <main className="flex min-w-0 flex-1 flex-col bg-[#fafcfc]">
      <div className="flex h-[12px] items-end justify-between border-b-2 border-[#b7c9e2] pl-[2px]">
        <div className="flex h-[9px] w-[56px] items-center gap-[2px] border border-b-0 border-[#9bb5d8] bg-white pl-[5px] font-['Noto_Sans',sans-serif] text-[#28568f]">
          <Icon name="part" />
          <span className="flex-1">CylRingHold.par</span>
          <IconButton name="close" className="size-[6px]" icon="size-[4px]" />
        </div>
        <div className="flex h-[9px] items-center">
          {["left", "right", "arrowDown", "close"].map((name) => (
            <IconButton key={name} name={name} className="h-2 w-[5px]" icon="size-[4px]" />
          ))}
        </div>
      </div>
      <div className="relative flex-1 overflow-hidden">
        <FeatureTree />
        <Model />
        <div className="absolute right-[37px] bottom-px font-['Open_Sans',sans-serif] whitespace-nowrap text-[#b4b6b8]">
          <p className="text-[7px] leading-[10px]">Aktiválja a Windowst</p>
          <p className="text-[5px] leading-[7px]">Aktiválja a Windows rendszert a Gépházban.</p>
        </div>
        <ViewCube />
      </div>
      <div className="flex h-[9px] items-center border-t border-[#c4c4c4] bg-white">
        <div className="flex w-[30px] items-center gap-[2px] pl-[2px] font-['Noto_Sans',sans-serif] text-[#2d65ad]">
          <Icon name="props" className="size-[8px]" />
          TippSor
        </div>
        <p className="flex-1 truncate border-l border-[#999] text-[5px] leading-[8px] text-[#111]">
          Válasszon geometriát, kattintson egy 'Régió'-ra a kihúzáshoz vagy forgatáshoz, vagy kattintson a 'Testek' parancsokra 3D-s alakelemek készítéséhez.
        </p>
        {["fontBig", "fontSmall", "lines", "arrowDown", "pin", "close"].map((name) => (
          <IconButton key={name} name={name} className="h-2 w-[6px]" icon="size-[5px]" />
        ))}
      </div>
    </main>
  )
}

function StatusBar() {
  return (
    <div className="flex h-[8px] items-center justify-end bg-[#2a579a]">
      <span className="mr-[38px] font-bold text-white">0 tétel van kiválasztva</span>
      <input aria-label="Parancs keresése" placeholder="Parancs keresése" className="h-[6px] w-[53px] bg-[#f2f4f7] px-px placeholder:text-[#aaa]" />
      {["wArrow", "wWindow", "wZoom", "wFit", "wFit", "wGreen", "wRotate", "wYellow", "wOrange", "wMinus"].map((name, i) => (
        <IconButton key={i} name={name} />
      ))}
      <input
        type="range"
        aria-label="Zoom"
        className="h-[8px] w-[44px] appearance-none bg-transparent [&::-webkit-slider-runnable-track]:h-px [&::-webkit-slider-runnable-track]:bg-[#c4d2e6] [&::-webkit-slider-thumb]:-mt-[2px] [&::-webkit-slider-thumb]:h-[5px] [&::-webkit-slider-thumb]:w-[3px] [&::-webkit-slider-thumb]:appearance-none [&::-webkit-slider-thumb]:bg-[#b9cce8]"
      />
      <IconButton name="wPlus" />
      <IconButton name="youtube" className="h-2 w-[9px]" />
      <IconButton name="record" className="h-2 w-[9px]" />
      <IconButton name="person" className="h-2 w-[9px]" />
    </div>
  )
}

function Taskbar() {
  return (
    <footer className="flex h-[15px] items-stretch bg-linear-to-r from-[#35332e] via-[#35231f] via-30% to-[#403c34] to-65% font-['Noto_Sans',sans-serif] text-[#f2f2f2]">
      <IconButton name="windows" className="w-[17px]" icon="size-[6px]" />
      <label className="flex w-[129px] items-center bg-[#f3f1f0] pl-[5px]">
        <Icon name="search" className="mr-[4px] size-[7px]" />
        <input aria-label="Keresés" placeholder="Írjon ide a kereséshez" className="min-w-0 flex-1 text-[5px] leading-[8px] placeholder:text-[#444]" />
        <svg viewBox="0 0 90 45" className="h-[15px] w-[30px]">
          <path d="M4 18q6-8 12 0zM20 10q7-8 14 0z" fill="#e9a6a5" />
          <path d="M38 18l3-9 3 9 4-10 4 8 4-14 5 13 4-11 4 14 5-5v18H38z" fill="#a38574" />
          <path d="M44 15h5v12h-5zM62 12h5v14h-5z" fill="#6b4f49" />
          <path d="M0 45c8-20 24-19 38-21 22-5 37-3 52 4v17z" fill="#6c8649" />
          <path d="M0 45c18-21 28-10 42-3l-6 3z" fill="#b55050" />
          <path d="M39 42c6-14 30-15 48-10v6c-22-8-32-2-36 7z" fill="#b9a45c" />
          <path d="M58 45c6-8 20-7 32-7v7z" fill="#3e6139" />
        </svg>
      </label>
      {["taskview", "edge", "explorer", "store", "mail", "cc", "torrent", "chrome", "solidEdge"].map((name, i) => (
        <IconButton
          key={name}
          name={name}
          className={clsx(
            i % 2 ? "w-[19px]" : "w-[18px]",
            "border-b",
            i > 5 ? "border-[#76b9ed]" : "border-transparent",
            i === 8 && "bg-[#6d6967]",
          )}
          icon={i === 0 ? "size-[6px]" : "size-[9px]"}
        />
      ))}
      <div className="ml-auto flex items-center pr-[5px]">
        <button type="button" className="flex items-center text-[5px]">
          <Icon name="cloud" className="mr-[3px] size-[9px]" />
          <span className="w-[14px]">10°C</span>
          <span className="w-[21px]">Felhős</span>
        </button>
        <IconButton name="up" className="w-[9px]" />
        <IconButton name="cloudWhite" className="w-[9px]" />
        <IconButton name="wifi" className="w-[9px]" />
        <IconButton name="speaker" className="w-[9px]" />
        <time className="w-[26px] text-center leading-[6px]">
          17:37
          <br />
          2022. 11. 05.
        </time>
        <IconButton name="note" className="w-[17px]" icon="size-[7px]" />
      </div>
    </footer>
  )
}

export default function App() {
  return (
    <div className="flex min-h-screen flex-col overflow-hidden bg-white font-['Liberation_Sans',Arial,sans-serif] text-[4px] leading-[6px] text-[#222]">
      <Header />
      <Ribbon />
      <CommandStrip />
      <div className="flex flex-1">
        <LibraryPanel />
        <Workspace />
      </div>
      <StatusBar />
      <Taskbar />
    </div>
  )
}
